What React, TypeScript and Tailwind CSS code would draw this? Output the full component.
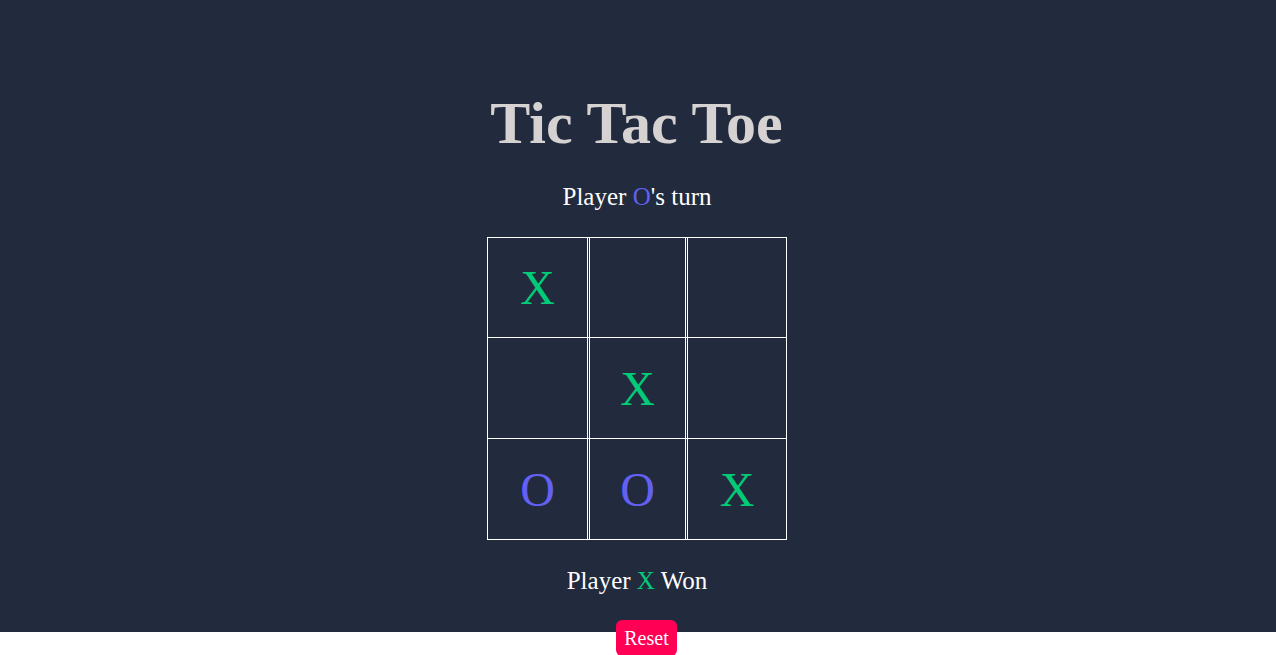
import React from "react";

const serif = { fontFamily: '"Liberation Serif", "Times New Roman", serif' };

type Mark = "X" | "O" | "";

function Cell({ v, w }: { v: Mark; w: string }) {
  return (
    <div
      className={`${w} h-full border-x border-white flex items-center justify-center text-[48px] leading-[1.107] ${
        v === "X" ? "text-[#00cc77]" : "text-[#6360f2]"
      }`}
    >
      {v}
    </div>
  );
}

export default function App() {
  const rows: Mark[][] = [
    ["X", "", ""],
    ["", "X", ""],
    ["O", "O", "X"],
  ];
  const widths = ["w-[101px]", "w-[97px]", "w-[100px]"];
  const heights = ["h-[100px]", "h-[101px]", "h-[101px]"];
  return (
    <div style={serif} className="w-full bg-white">
      <div className="h-[632px] bg-[#222a3e]">
        <div className="flex flex-col items-center">
          <h1 className="mt-[90px] text-[60px] font-bold leading-[1.107] text-[#d6d2d2] mr-[3px]">
            Tic Tac Toe
          </h1>
          <p className="mt-[27px] mr-[2px] text-[25px] leading-[1.107] text-white">
            Player <span className="text-[#6360f2]">O</span>'s turn
          </p>
          <div className="mt-[26px] mr-[2px] w-[300px] flex flex-col border-t border-white">
            {rows.map((r, i) => (
              <div key={i} className={`${heights[i]} flex gap-[1px] border-b border-white`}>
                {r.map((v, j) => (
                  <Cell key={j} v={v} w={widths[j]} />
                ))}
              </div>
            ))}
          </div>
          <p className="mt-[27px] mr-[2px] text-[25px] leading-[1.107] text-white">
            Player <span className="text-[#00cc77]">X</span> Won
          </p>
        </div>
      </div>
      <div className="relative -mt-[12px] flex justify-center">
        <button className="ml-[17px] w-[61px] bg-[#ff0055] text-white text-[20px] leading-[1.107] pt-[7px] pb-[7px] rounded-[6px]">
          Reset
        </button>
      </div>
    </div>
  );
}
